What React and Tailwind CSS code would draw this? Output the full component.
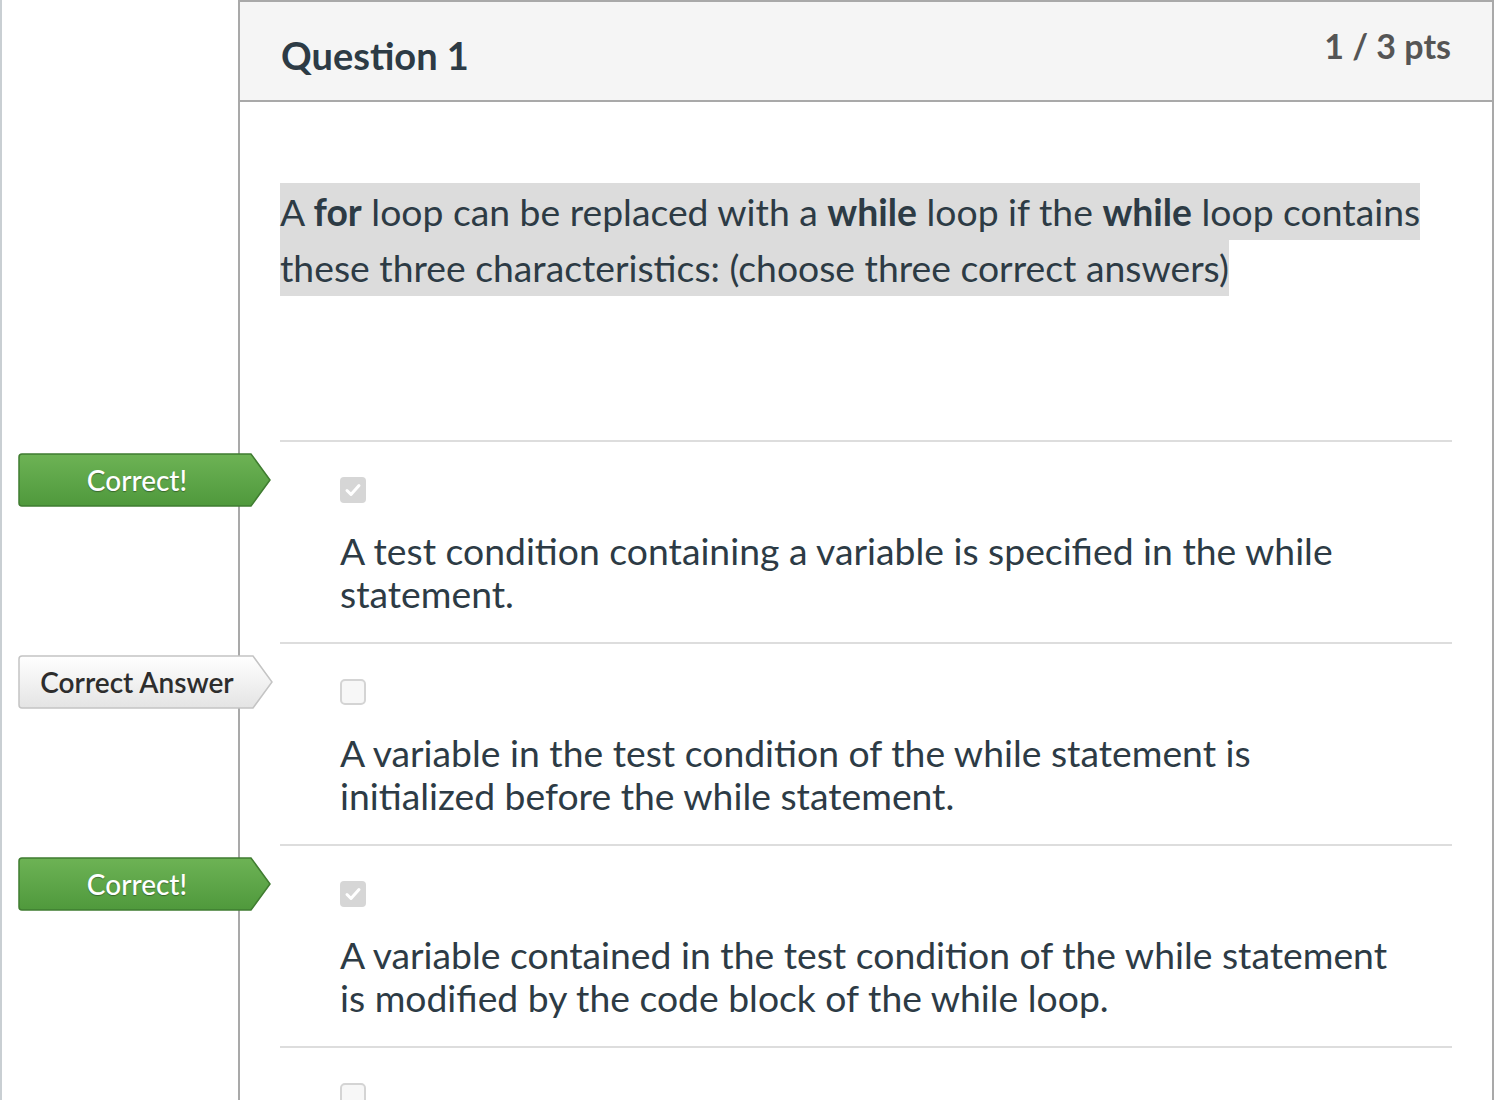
import React from 'react';

const answers = [
  {
    text: 'A test condition containing a variable is specified in the while statement.',
    checked: true,
    label: 'correct',
  },
  {
    text: 'A variable in the test condition of the while statement is initialized before the while statement.',
    checked: false,
    label: 'answer',
  },
  {
    text: 'A variable contained in the test condition of the while statement is modified by the code block of the while loop.',
    checked: true,
    label: 'correct',
  },
  {
    text: 'The while loop contains a statement that ends the program.',
    checked: false,
    label: null,
  },
];

const Tag = ({ kind }) => {
  const green = kind === 'correct';
  const w = green ? 253 : 255;
  const body = w - 20;
  return (
    <div className="relative h-[54px] flex items-center" style={{ width: w }}>
      <svg className="absolute inset-0" width={w} height="54" viewBox={`0 0 ${w} 54`}>
        <defs>
          <linearGradient id={`g-${kind}`} x1="0" y1="0" x2="0" y2="1">
            <stop offset="0" stopColor={green ? '#6db355' : '#ffffff'} />
            <stop offset="1" stopColor={green ? '#4f993c' : '#e4e4e4'} />
          </linearGradient>
        </defs>
        <path
          d={`M4 1 H${body} L${w - 1} 27 L${body} 53 H4 Q1 53 1 50 V4 Q1 1 4 1 Z`}
          fill={`url(#g-${kind})`}
          stroke={green ? '#3f7c30' : '#c4c4c4'}
          strokeWidth="1.5"
        />
      </svg>
      <span
        className={`relative w-[238px] text-center text-[28px] ${
          green ? 'text-white font-medium [text-shadow:0_1px_1px_rgba(0,0,0,0.35)]' : 'text-[#2d2d2d] font-semibold'
        }`}
      >
        {green ? 'Correct!' : 'Correct Answer'}
      </span>
    </div>
  );
};

const Box = ({ checked }) =>
  checked ? (
    <div className="w-[26px] h-[26px] rounded-[4px] bg-[#d6d6d6] flex items-center justify-center">
      <svg width="18" height="18" viewBox="0 0 18 18">
        <path d="M3 9.5 L7 13.5 L15 4.5" fill="none" stroke="#ffffff" strokeWidth="3" strokeLinecap="round" strokeLinejoin="round" />
      </svg>
    </div>
  ) : (
    <div className="w-[26px] h-[26px] rounded-[5px] bg-[#f7f7f7] border-2 border-[#d4d4d4]" />
  );

const App = () => {
  return (
    <div className="min-h-screen h-[1100px] overflow-hidden bg-white border-l-2 border-[#c9cfd3] flex font-['Lato','Liberation_Sans',sans-serif] text-[#2d3b45]">
      <div className="w-[236px] shrink-0" />
      <div className="w-[1256px] shrink-0 border-x-2 border-t-2 border-[#a9a9a9]">
        <div className="h-[100px] bg-[#f5f5f5] border-b-2 border-[#a9a9a9] flex justify-between px-[41px]">
          <h2 className="mt-[27px] text-[38px] font-bold leading-[52px]">Question 1</h2>
          <div className="mt-[21px] text-[34px] font-bold text-[#555555] leading-[46px]">1 / 3 pts</div>
        </div>

        <div className="px-[40px]">
          <p className="pt-[82px] pb-[144px] text-[37.3px] leading-[56px] w-[1172px]">
            <span className="bg-[#dcdcdc] py-[6px] box-decoration-clone">
              A <b>for</b> loop can be replaced with a <b>while</b> loop if the <b>while</b> loop contains these three
              characteristics: (choose three correct answers)
            </span>
          </p>

          {answers.map((a, i) => (
            <div key={i} className="relative border-t-2 border-[#dddddd] pl-[60px] pt-[35px] pb-[27px]">
              {a.label && (
                <div className="absolute left-[-262px] top-[11px]">
                  <Tag kind={a.label} />
                </div>
              )}
              <Box checked={a.checked} />
              <p className="mt-[26px] text-[37.3px] leading-[43px] max-w-[1062px]">{a.text}</p>
            </div>
          ))}
        </div>
      </div>
    </div>
  );
};

export default App;
